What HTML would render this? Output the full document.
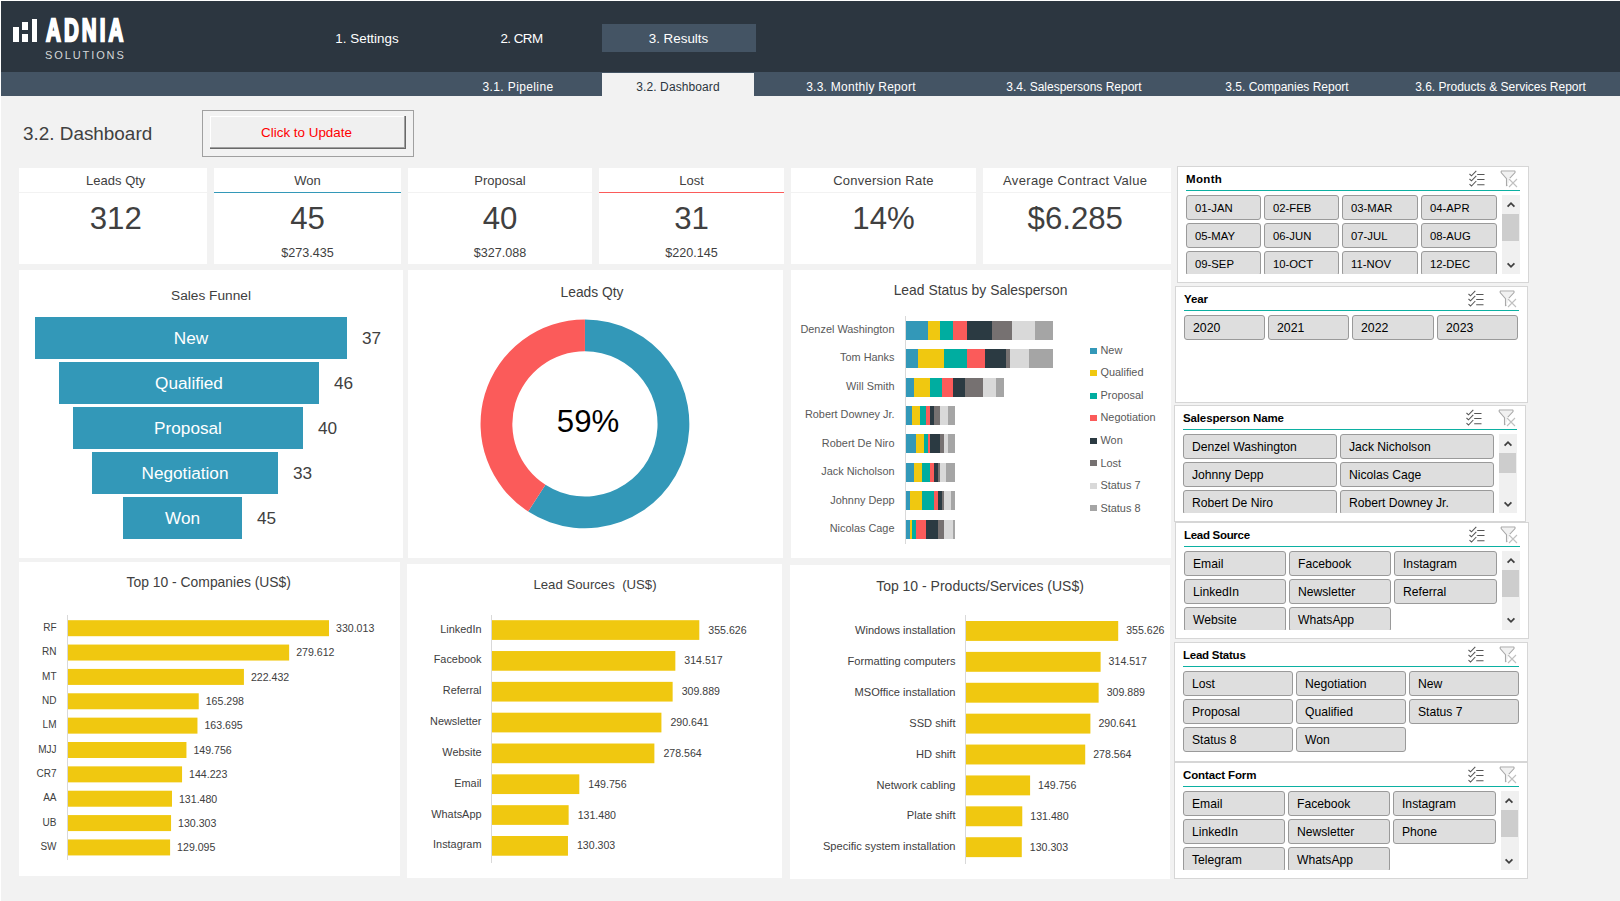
<!DOCTYPE html>
<html lang="en"><head><meta charset="utf-8"><title>3.2. Dashboard</title>
<style>
html,body{margin:0;padding:0}
body{width:1620px;height:901px;overflow:hidden;background:#fff;font-family:"Liberation Sans", sans-serif}
#p{position:relative;width:1620px;height:901px;overflow:hidden;background:#fff}
#bg{position:absolute;left:1px;top:1px;width:1619px;height:900px;background:#f2f2f2}
#p div{position:absolute}
.t{white-space:pre}
.sb{height:25px;box-sizing:border-box;border:1px solid #9a9a9a;border-radius:3px;background:#dedede;color:#000;line-height:25px;padding-left:8px;white-space:pre;overflow:hidden}
</style></head>
<body><div id="p"><div id="bg"></div>
<div style="left:1px;top:1px;width:1619px;height:71px;background:#2c3640"></div>
<div style="left:1px;top:72px;width:1619px;height:24px;background:#445464"></div>
<div style="left:13px;top:27px;width:6px;height:15px;background:#fff"></div>
<div style="left:22px;top:22px;width:6px;height:8px;background:#fff"></div>
<div style="left:22px;top:34px;width:6px;height:8px;background:#fff"></div>
<div style="left:31.5px;top:18.5px;width:5.5px;height:23.5px;background:#fff"></div>
<div class="t" style="left:45.8px;top:12.4px;height:36px;line-height:36px;font-size:32px;font-weight:700;color:#fff;transform-origin:0 50%;transform:scaleX(0.642);letter-spacing:4.8px;-webkit-text-stroke:2.3px #fff">ADNIA</div>
<div class="t" style="left:45px;top:48px;height:14px;line-height:14px;font-size:11px;color:#d4d6d8;letter-spacing:1.9px">SOLUTIONS</div>
<div style="left:602px;top:24px;width:154px;height:28px;background:#445464"></div>
<div class="t" style="left:167.00px;top:28.50px;width:400px;height:20px;line-height:20px;font-size:13.4px;color:#fff;text-align:center;font-weight:400;">1. Settings</div>
<div class="t" style="left:321.50px;top:28.50px;width:400px;height:20px;line-height:20px;font-size:13.4px;color:#fff;text-align:center;font-weight:400;letter-spacing:-0.55px;">2. CRM</div>
<div class="t" style="left:478.50px;top:28.50px;width:400px;height:20px;line-height:20px;font-size:13.4px;color:#fff;text-align:center;font-weight:400;">3. Results</div>
<div style="left:602px;top:73px;width:152px;height:23px;background:#f2f2f2"></div>
<div class="t" style="left:318.00px;top:78.00px;width:400px;height:18px;line-height:18px;font-size:12.0px;color:#fff;text-align:center;font-weight:400;letter-spacing:0.38px;">3.1. Pipeline</div>
<div class="t" style="left:478.00px;top:78.00px;width:400px;height:18px;line-height:18px;font-size:12.0px;color:#2c3640;text-align:center;font-weight:400;letter-spacing:0.1px;">3.2. Dashboard</div>
<div class="t" style="left:661.00px;top:78.00px;width:400px;height:18px;line-height:18px;font-size:12.0px;color:#fff;text-align:center;font-weight:400;letter-spacing:0.26px;">3.3. Monthly Report</div>
<div class="t" style="left:874.00px;top:78.00px;width:400px;height:18px;line-height:18px;font-size:12.0px;color:#fff;text-align:center;font-weight:400;">3.4. Salespersons Report</div>
<div class="t" style="left:1087.00px;top:78.00px;width:400px;height:18px;line-height:18px;font-size:12.0px;color:#fff;text-align:center;font-weight:400;">3.5. Companies Report</div>
<div class="t" style="left:1300.50px;top:78.00px;width:400px;height:18px;line-height:18px;font-size:12.0px;color:#fff;text-align:center;font-weight:400;">3.6. Products &amp; Services Report</div>
<div class="t" style="left:23.00px;top:120.50px;width:400px;height:26px;line-height:26px;font-size:18.9px;color:#404040;text-align:left;font-weight:400;">3.2. Dashboard</div>
<div style="left:202px;top:110px;width:212px;height:47px;border:1px solid #a0a0a0;box-sizing:border-box"></div>
<div style="left:210px;top:116px;width:196px;height:33px;background:#f0f0f0;box-shadow:inset -1px -1px 0 #696969,inset -2px -2px 0 #a0a0a0,inset 1px 1px 0 #fff"></div>
<div class="t" style="left:106.50px;top:122.50px;width:400px;height:20px;line-height:20px;font-size:13.4px;color:#ff0000;text-align:center;font-weight:400;">Click to Update</div>
<div style="left:19px;top:168px;width:188px;height:96px;background:#fff"></div>
<div style="left:19px;top:192px;width:188px;height:1px;background:#f2f2f2"></div>
<div class="t" style="left:-84.25px;top:171.50px;width:400px;height:18px;line-height:18px;font-size:13.0px;color:#404040;text-align:center;font-weight:400;">Leads Qty</div>
<div class="t" style="left:-84.25px;top:196.60px;width:400px;height:44px;line-height:44px;font-size:31.2px;color:#404040;text-align:center;font-weight:400;">312</div>
<div style="left:214px;top:168px;width:187px;height:96px;background:#fff"></div>
<div style="left:214px;top:192px;width:187px;height:1px;background:#3398b8"></div>
<div class="t" style="left:107.50px;top:171.50px;width:400px;height:18px;line-height:18px;font-size:13.0px;color:#404040;text-align:center;font-weight:400;">Won</div>
<div class="t" style="left:107.50px;top:196.60px;width:400px;height:44px;line-height:44px;font-size:31.2px;color:#404040;text-align:center;font-weight:400;">45</div>
<div class="t" style="left:107.50px;top:243.50px;width:400px;height:18px;line-height:18px;font-size:12.6px;color:#404040;text-align:center;font-weight:400;">$273.435</div>
<div style="left:408px;top:168px;width:184px;height:96px;background:#fff"></div>
<div style="left:408px;top:192px;width:184px;height:1px;background:#f2f2f2"></div>
<div class="t" style="left:300.00px;top:171.50px;width:400px;height:18px;line-height:18px;font-size:13.0px;color:#404040;text-align:center;font-weight:400;">Proposal</div>
<div class="t" style="left:300.00px;top:196.60px;width:400px;height:44px;line-height:44px;font-size:31.2px;color:#404040;text-align:center;font-weight:400;">40</div>
<div class="t" style="left:300.00px;top:243.50px;width:400px;height:18px;line-height:18px;font-size:12.6px;color:#404040;text-align:center;font-weight:400;">$327.088</div>
<div style="left:599px;top:168px;width:185px;height:96px;background:#fff"></div>
<div style="left:599px;top:192px;width:185px;height:1px;background:#fb5b5a"></div>
<div class="t" style="left:491.50px;top:171.50px;width:400px;height:18px;line-height:18px;font-size:13.0px;color:#404040;text-align:center;font-weight:400;">Lost</div>
<div class="t" style="left:491.50px;top:196.60px;width:400px;height:44px;line-height:44px;font-size:31.2px;color:#404040;text-align:center;font-weight:400;">31</div>
<div class="t" style="left:491.50px;top:243.50px;width:400px;height:18px;line-height:18px;font-size:12.6px;color:#404040;text-align:center;font-weight:400;">$220.145</div>
<div style="left:791px;top:168px;width:185px;height:96px;background:#fff"></div>
<div style="left:791px;top:192px;width:185px;height:1px;background:#f2f2f2"></div>
<div class="t" style="left:683.50px;top:171.50px;width:400px;height:18px;line-height:18px;font-size:13.0px;color:#404040;text-align:center;font-weight:400;letter-spacing:0.25px;">Conversion Rate</div>
<div class="t" style="left:683.50px;top:196.60px;width:400px;height:44px;line-height:44px;font-size:31.2px;color:#404040;text-align:center;font-weight:400;">14%</div>
<div style="left:983px;top:168px;width:187.5px;height:96px;background:#fff"></div>
<div style="left:983px;top:192px;width:187.5px;height:1px;background:#f2f2f2"></div>
<div class="t" style="left:875.25px;top:171.50px;width:400px;height:18px;line-height:18px;font-size:13.0px;color:#404040;text-align:center;font-weight:400;letter-spacing:0.34px;">Average Contract Value</div>
<div class="t" style="left:875.25px;top:196.60px;width:400px;height:44px;line-height:44px;font-size:31.2px;color:#404040;text-align:center;font-weight:400;">$6.285</div>
<div style="left:19px;top:270px;width:384px;height:288px;background:#fff"></div>
<div class="t" style="left:11.00px;top:285.50px;width:400px;height:20px;line-height:20px;font-size:13.7px;color:#404040;text-align:center;font-weight:400;">Sales Funnel</div>
<div style="left:35px;top:317px;width:312px;height:42px;background:#3398b8"></div>
<div class="t" style="left:-9.00px;top:326.00px;width:400px;height:24px;line-height:24px;font-size:17.2px;color:#fff;text-align:center;font-weight:400;">New</div>
<div class="t" style="left:362.00px;top:326.00px;width:400px;height:24px;line-height:24px;font-size:17.2px;color:#404040;text-align:left;font-weight:400;">37</div>
<div style="left:59px;top:362px;width:260px;height:42px;background:#3398b8"></div>
<div class="t" style="left:-11.00px;top:371.00px;width:400px;height:24px;line-height:24px;font-size:17.2px;color:#fff;text-align:center;font-weight:400;">Qualified</div>
<div class="t" style="left:334.00px;top:371.00px;width:400px;height:24px;line-height:24px;font-size:17.2px;color:#404040;text-align:left;font-weight:400;">46</div>
<div style="left:73px;top:407px;width:230px;height:42px;background:#3398b8"></div>
<div class="t" style="left:-12.00px;top:416.00px;width:400px;height:24px;line-height:24px;font-size:17.2px;color:#fff;text-align:center;font-weight:400;">Proposal</div>
<div class="t" style="left:318.00px;top:416.00px;width:400px;height:24px;line-height:24px;font-size:17.2px;color:#404040;text-align:left;font-weight:400;">40</div>
<div style="left:92px;top:452px;width:186px;height:42px;background:#3398b8"></div>
<div class="t" style="left:-15.00px;top:461.00px;width:400px;height:24px;line-height:24px;font-size:17.2px;color:#fff;text-align:center;font-weight:400;">Negotiation</div>
<div class="t" style="left:293.00px;top:461.00px;width:400px;height:24px;line-height:24px;font-size:17.2px;color:#404040;text-align:left;font-weight:400;">33</div>
<div style="left:123px;top:497px;width:119px;height:42px;background:#3398b8"></div>
<div class="t" style="left:-17.50px;top:506.00px;width:400px;height:24px;line-height:24px;font-size:17.2px;color:#fff;text-align:center;font-weight:400;">Won</div>
<div class="t" style="left:257.00px;top:506.00px;width:400px;height:24px;line-height:24px;font-size:17.2px;color:#404040;text-align:left;font-weight:400;">45</div>
<div style="left:408px;top:270px;width:375px;height:288px;background:#fff"></div>
<div class="t" style="left:392.00px;top:282.75px;width:400px;height:20px;line-height:20px;font-size:13.8px;color:#404040;text-align:center;font-weight:400;">Leads Qty</div>
<svg style="position:absolute;left:0;top:0" width="1620" height="901"><path d="M584.95,319.50 A104.4,104.4 0 1 1 528.18,511.52 L545.47,484.83 A72.6,72.6 0 1 0 584.95,351.30 Z" fill="#3398b8"/><path d="M528.18,511.52 A104.4,104.4 0 0 1 584.95,319.50 L584.95,351.30 A72.6,72.6 0 0 0 545.47,484.83 Z" fill="#fb5b5a"/></svg>
<div class="t" style="left:388.00px;top:400.25px;width:400px;height:44px;line-height:44px;font-size:31.2px;color:#000;text-align:center;font-weight:400;">59%</div>
<div style="left:791px;top:270px;width:380px;height:288px;background:#fff"></div>
<div class="t" style="left:780.50px;top:279.75px;width:400px;height:20px;line-height:20px;font-size:13.9px;color:#404040;text-align:center;font-weight:400;">Lead Status by Salesperson</div>
<div style="left:905px;top:316px;width:1px;height:228px;background:#d9d9d9"></div>
<div style="left:906px;top:321px;width:22px;height:19px;background:#3398b8"></div>
<div style="left:928px;top:321px;width:12px;height:19px;background:#f0c810"></div>
<div style="left:940px;top:321px;width:13px;height:19px;background:#00ada0"></div>
<div style="left:953px;top:321px;width:14px;height:19px;background:#fb5b5a"></div>
<div style="left:967px;top:321px;width:25px;height:19px;background:#2b3a42"></div>
<div style="left:992px;top:321px;width:20px;height:19px;background:#767171"></div>
<div style="left:1012px;top:321px;width:23px;height:19px;background:#d9d9d9"></div>
<div style="left:1035px;top:321px;width:18px;height:19px;background:#a5a5a5"></div>
<div class="t" style="left:494.50px;top:321.00px;width:400px;height:16px;line-height:16px;font-size:10.9px;color:#595959;text-align:right;font-weight:400;">Denzel Washington</div>
<div style="left:906px;top:349px;width:12px;height:19px;background:#3398b8"></div>
<div style="left:918px;top:349px;width:26px;height:19px;background:#f0c810"></div>
<div style="left:944px;top:349px;width:23px;height:19px;background:#00ada0"></div>
<div style="left:967px;top:349px;width:18px;height:19px;background:#fb5b5a"></div>
<div style="left:985px;top:349px;width:21px;height:19px;background:#2b3a42"></div>
<div style="left:1006px;top:349px;width:4px;height:19px;background:#767171"></div>
<div style="left:1010px;top:349px;width:19px;height:19px;background:#d9d9d9"></div>
<div style="left:1029px;top:349px;width:24px;height:19px;background:#a5a5a5"></div>
<div class="t" style="left:494.50px;top:349.43px;width:400px;height:16px;line-height:16px;font-size:10.9px;color:#595959;text-align:right;font-weight:400;">Tom Hanks</div>
<div style="left:906px;top:378px;width:8px;height:19px;background:#3398b8"></div>
<div style="left:914px;top:378px;width:16px;height:19px;background:#f0c810"></div>
<div style="left:930px;top:378px;width:12px;height:19px;background:#00ada0"></div>
<div style="left:942px;top:378px;width:11px;height:19px;background:#fb5b5a"></div>
<div style="left:953px;top:378px;width:12px;height:19px;background:#2b3a42"></div>
<div style="left:965px;top:378px;width:18px;height:19px;background:#767171"></div>
<div style="left:983px;top:378px;width:13px;height:19px;background:#d9d9d9"></div>
<div style="left:996px;top:378px;width:8px;height:19px;background:#a5a5a5"></div>
<div class="t" style="left:494.50px;top:377.86px;width:400px;height:16px;line-height:16px;font-size:10.9px;color:#595959;text-align:right;font-weight:400;">Will Smith</div>
<div style="left:906px;top:406px;width:6px;height:19px;background:#3398b8"></div>
<div style="left:912px;top:406px;width:8px;height:19px;background:#f0c810"></div>
<div style="left:920px;top:406px;width:6px;height:19px;background:#00ada0"></div>
<div style="left:926px;top:406px;width:4px;height:19px;background:#fb5b5a"></div>
<div style="left:930px;top:406px;width:4px;height:19px;background:#2b3a42"></div>
<div style="left:934px;top:406px;width:6px;height:19px;background:#767171"></div>
<div style="left:940px;top:406px;width:8px;height:19px;background:#d9d9d9"></div>
<div style="left:948px;top:406px;width:7px;height:19px;background:#a5a5a5"></div>
<div class="t" style="left:494.50px;top:406.29px;width:400px;height:16px;line-height:16px;font-size:10.9px;color:#595959;text-align:right;font-weight:400;">Robert Downey Jr.</div>
<div style="left:906px;top:434px;width:10px;height:19px;background:#3398b8"></div>
<div style="left:916px;top:434px;width:8px;height:19px;background:#f0c810"></div>
<div style="left:924px;top:434px;width:4px;height:19px;background:#00ada0"></div>
<div style="left:928px;top:434px;width:2px;height:19px;background:#fb5b5a"></div>
<div style="left:930px;top:434px;width:10px;height:19px;background:#2b3a42"></div>
<div style="left:940px;top:434px;width:4px;height:19px;background:#767171"></div>
<div style="left:944px;top:434px;width:4px;height:19px;background:#d9d9d9"></div>
<div style="left:948px;top:434px;width:7px;height:19px;background:#a5a5a5"></div>
<div class="t" style="left:494.50px;top:434.72px;width:400px;height:16px;line-height:16px;font-size:10.9px;color:#595959;text-align:right;font-weight:400;">Robert De Niro</div>
<div style="left:906px;top:463px;width:8px;height:19px;background:#3398b8"></div>
<div style="left:914px;top:463px;width:8px;height:19px;background:#f0c810"></div>
<div style="left:922px;top:463px;width:8px;height:19px;background:#00ada0"></div>
<div style="left:930px;top:463px;width:4px;height:19px;background:#fb5b5a"></div>
<div style="left:934px;top:463px;width:4px;height:19px;background:#2b3a42"></div>
<div style="left:938px;top:463px;width:2px;height:19px;background:#767171"></div>
<div style="left:940px;top:463px;width:6px;height:19px;background:#d9d9d9"></div>
<div style="left:946px;top:463px;width:9px;height:19px;background:#a5a5a5"></div>
<div class="t" style="left:494.50px;top:463.15px;width:400px;height:16px;line-height:16px;font-size:10.9px;color:#595959;text-align:right;font-weight:400;">Jack Nicholson</div>
<div style="left:906px;top:491px;width:4px;height:19px;background:#3398b8"></div>
<div style="left:910px;top:491px;width:12px;height:19px;background:#f0c810"></div>
<div style="left:922px;top:491px;width:12px;height:19px;background:#00ada0"></div>
<div style="left:934px;top:491px;width:4px;height:19px;background:#fb5b5a"></div>
<div style="left:938px;top:491px;width:4px;height:19px;background:#2b3a42"></div>
<div style="left:942px;top:491px;width:2px;height:19px;background:#767171"></div>
<div style="left:944px;top:491px;width:7px;height:19px;background:#d9d9d9"></div>
<div style="left:951px;top:491px;width:4px;height:19px;background:#a5a5a5"></div>
<div class="t" style="left:494.50px;top:491.58px;width:400px;height:16px;line-height:16px;font-size:10.9px;color:#595959;text-align:right;font-weight:400;">Johnny Depp</div>
<div style="left:906px;top:520px;width:4px;height:19px;background:#3398b8"></div>
<div style="left:910px;top:520px;width:2px;height:19px;background:#f0c810"></div>
<div style="left:912px;top:520px;width:4px;height:19px;background:#00ada0"></div>
<div style="left:916px;top:520px;width:10px;height:19px;background:#fb5b5a"></div>
<div style="left:926px;top:520px;width:12px;height:19px;background:#2b3a42"></div>
<div style="left:938px;top:520px;width:6px;height:19px;background:#767171"></div>
<div style="left:944px;top:520px;width:9px;height:19px;background:#d9d9d9"></div>
<div style="left:953px;top:520px;width:2px;height:19px;background:#a5a5a5"></div>
<div class="t" style="left:494.50px;top:520.01px;width:400px;height:16px;line-height:16px;font-size:10.9px;color:#595959;text-align:right;font-weight:400;">Nicolas Cage</div>
<div style="left:1090px;top:348px;width:7px;height:6px;background:#3398b8"></div>
<div class="t" style="left:1100.50px;top:341.70px;width:400px;height:16px;line-height:16px;font-size:10.9px;color:#595959;text-align:left;font-weight:400;">New</div>
<div style="left:1090px;top:370px;width:7px;height:6px;background:#f0c810"></div>
<div class="t" style="left:1100.50px;top:364.27px;width:400px;height:16px;line-height:16px;font-size:10.9px;color:#595959;text-align:left;font-weight:400;">Qualified</div>
<div style="left:1090px;top:393px;width:7px;height:6px;background:#00ada0"></div>
<div class="t" style="left:1100.50px;top:386.84px;width:400px;height:16px;line-height:16px;font-size:10.9px;color:#595959;text-align:left;font-weight:400;">Proposal</div>
<div style="left:1090px;top:415px;width:7px;height:6px;background:#fb5b5a"></div>
<div class="t" style="left:1100.50px;top:409.41px;width:400px;height:16px;line-height:16px;font-size:10.9px;color:#595959;text-align:left;font-weight:400;">Negotiation</div>
<div style="left:1090px;top:438px;width:7px;height:6px;background:#2b3a42"></div>
<div class="t" style="left:1100.50px;top:431.98px;width:400px;height:16px;line-height:16px;font-size:10.9px;color:#595959;text-align:left;font-weight:400;">Won</div>
<div style="left:1090px;top:460px;width:7px;height:6px;background:#767171"></div>
<div class="t" style="left:1100.50px;top:454.55px;width:400px;height:16px;line-height:16px;font-size:10.9px;color:#595959;text-align:left;font-weight:400;">Lost</div>
<div style="left:1090px;top:483px;width:7px;height:6px;background:#d9d9d9"></div>
<div class="t" style="left:1100.50px;top:477.12px;width:400px;height:16px;line-height:16px;font-size:10.9px;color:#595959;text-align:left;font-weight:400;">Status 7</div>
<div style="left:1090px;top:505px;width:7px;height:6px;background:#a5a5a5"></div>
<div class="t" style="left:1100.50px;top:499.69px;width:400px;height:16px;line-height:16px;font-size:10.9px;color:#595959;text-align:left;font-weight:400;">Status 8</div>
<div style="left:19px;top:562px;width:381px;height:314px;background:#fff"></div>
<div class="t" style="left:8.75px;top:571.90px;width:400px;height:20px;line-height:20px;font-size:13.9px;color:#404040;text-align:center;font-weight:400;">Top 10 - Companies (US$)</div>
<div style="left:67px;top:615px;width:1px;height:245px;background:#d9d9d9"></div>
<svg style="position:absolute;left:0;top:0" width="1620" height="901" fill="#f0c810"><rect x="68" y="620.20" width="261.00" height="16.0"/><rect x="68" y="644.56" width="221.14" height="16.0"/><rect x="68" y="668.92" width="175.92" height="16.0"/><rect x="68" y="693.28" width="130.73" height="16.0"/><rect x="68" y="717.64" width="129.46" height="16.0"/><rect x="68" y="742.00" width="118.44" height="16.0"/><rect x="68" y="766.36" width="114.06" height="16.0"/><rect x="68" y="790.72" width="103.98" height="16.0"/><rect x="68" y="815.08" width="103.05" height="16.0"/><rect x="68" y="839.44" width="102.10" height="16.0"/></svg>
<div class="t" style="left:-343.50px;top:620.80px;width:400px;height:14px;line-height:14px;font-size:10.0px;color:#404040;text-align:right;font-weight:400;">RF</div>
<div class="t" style="left:336.00px;top:620.00px;width:400px;height:16px;line-height:16px;font-size:10.6px;color:#404040;text-align:left;font-weight:400;">330.013</div>
<div class="t" style="left:-343.50px;top:645.16px;width:400px;height:14px;line-height:14px;font-size:10.0px;color:#404040;text-align:right;font-weight:400;">RN</div>
<div class="t" style="left:296.14px;top:644.36px;width:400px;height:16px;line-height:16px;font-size:10.6px;color:#404040;text-align:left;font-weight:400;">279.612</div>
<div class="t" style="left:-343.50px;top:669.52px;width:400px;height:14px;line-height:14px;font-size:10.0px;color:#404040;text-align:right;font-weight:400;">MT</div>
<div class="t" style="left:250.92px;top:668.72px;width:400px;height:16px;line-height:16px;font-size:10.6px;color:#404040;text-align:left;font-weight:400;">222.432</div>
<div class="t" style="left:-343.50px;top:693.88px;width:400px;height:14px;line-height:14px;font-size:10.0px;color:#404040;text-align:right;font-weight:400;">ND</div>
<div class="t" style="left:205.73px;top:693.08px;width:400px;height:16px;line-height:16px;font-size:10.6px;color:#404040;text-align:left;font-weight:400;">165.298</div>
<div class="t" style="left:-343.50px;top:718.24px;width:400px;height:14px;line-height:14px;font-size:10.0px;color:#404040;text-align:right;font-weight:400;">LM</div>
<div class="t" style="left:204.46px;top:717.44px;width:400px;height:16px;line-height:16px;font-size:10.6px;color:#404040;text-align:left;font-weight:400;">163.695</div>
<div class="t" style="left:-343.50px;top:742.60px;width:400px;height:14px;line-height:14px;font-size:10.0px;color:#404040;text-align:right;font-weight:400;">MJJ</div>
<div class="t" style="left:193.44px;top:741.80px;width:400px;height:16px;line-height:16px;font-size:10.6px;color:#404040;text-align:left;font-weight:400;">149.756</div>
<div class="t" style="left:-343.50px;top:766.96px;width:400px;height:14px;line-height:14px;font-size:10.0px;color:#404040;text-align:right;font-weight:400;">CR7</div>
<div class="t" style="left:189.06px;top:766.16px;width:400px;height:16px;line-height:16px;font-size:10.6px;color:#404040;text-align:left;font-weight:400;">144.223</div>
<div class="t" style="left:-343.50px;top:791.32px;width:400px;height:14px;line-height:14px;font-size:10.0px;color:#404040;text-align:right;font-weight:400;">AA</div>
<div class="t" style="left:178.98px;top:790.52px;width:400px;height:16px;line-height:16px;font-size:10.6px;color:#404040;text-align:left;font-weight:400;">131.480</div>
<div class="t" style="left:-343.50px;top:815.68px;width:400px;height:14px;line-height:14px;font-size:10.0px;color:#404040;text-align:right;font-weight:400;">UB</div>
<div class="t" style="left:178.05px;top:814.88px;width:400px;height:16px;line-height:16px;font-size:10.6px;color:#404040;text-align:left;font-weight:400;">130.303</div>
<div class="t" style="left:-343.50px;top:840.04px;width:400px;height:14px;line-height:14px;font-size:10.0px;color:#404040;text-align:right;font-weight:400;">SW</div>
<div class="t" style="left:177.10px;top:839.24px;width:400px;height:16px;line-height:16px;font-size:10.6px;color:#404040;text-align:left;font-weight:400;">129.095</div>
<div style="left:407px;top:564px;width:375px;height:314px;background:#fff"></div>
<div class="t" style="left:395.00px;top:575.50px;width:400px;height:18px;line-height:18px;font-size:13.2px;color:#404040;text-align:center;font-weight:400;">Lead Sources&nbsp; (US$)</div>
<div style="left:491px;top:614.5px;width:1px;height:248.5px;background:#d9d9d9"></div>
<svg style="position:absolute;left:0;top:0" width="1620" height="901" fill="#f0c810"><rect x="492" y="620.20" width="207.30" height="19.7"/><rect x="492" y="651.03" width="183.34" height="19.7"/><rect x="492" y="681.86" width="180.64" height="19.7"/><rect x="492" y="712.69" width="169.42" height="19.7"/><rect x="492" y="743.52" width="162.38" height="19.7"/><rect x="492" y="774.35" width="87.30" height="19.7"/><rect x="492" y="805.18" width="76.64" height="19.7"/><rect x="492" y="836.01" width="75.96" height="19.7"/></svg>
<div class="t" style="left:81.50px;top:620.55px;width:400px;height:16px;line-height:16px;font-size:10.9px;color:#404040;text-align:right;font-weight:400;">LinkedIn</div>
<div class="t" style="left:708.30px;top:621.55px;width:400px;height:16px;line-height:16px;font-size:10.6px;color:#404040;text-align:left;font-weight:400;">355.626</div>
<div class="t" style="left:81.50px;top:651.38px;width:400px;height:16px;line-height:16px;font-size:10.9px;color:#404040;text-align:right;font-weight:400;">Facebook</div>
<div class="t" style="left:684.34px;top:652.38px;width:400px;height:16px;line-height:16px;font-size:10.6px;color:#404040;text-align:left;font-weight:400;">314.517</div>
<div class="t" style="left:81.50px;top:682.21px;width:400px;height:16px;line-height:16px;font-size:10.9px;color:#404040;text-align:right;font-weight:400;">Referral</div>
<div class="t" style="left:681.64px;top:683.21px;width:400px;height:16px;line-height:16px;font-size:10.6px;color:#404040;text-align:left;font-weight:400;">309.889</div>
<div class="t" style="left:81.50px;top:713.04px;width:400px;height:16px;line-height:16px;font-size:10.9px;color:#404040;text-align:right;font-weight:400;">Newsletter</div>
<div class="t" style="left:670.42px;top:714.04px;width:400px;height:16px;line-height:16px;font-size:10.6px;color:#404040;text-align:left;font-weight:400;">290.641</div>
<div class="t" style="left:81.50px;top:743.87px;width:400px;height:16px;line-height:16px;font-size:10.9px;color:#404040;text-align:right;font-weight:400;">Website</div>
<div class="t" style="left:663.38px;top:744.87px;width:400px;height:16px;line-height:16px;font-size:10.6px;color:#404040;text-align:left;font-weight:400;">278.564</div>
<div class="t" style="left:81.50px;top:774.70px;width:400px;height:16px;line-height:16px;font-size:10.9px;color:#404040;text-align:right;font-weight:400;">Email</div>
<div class="t" style="left:588.30px;top:775.70px;width:400px;height:16px;line-height:16px;font-size:10.6px;color:#404040;text-align:left;font-weight:400;">149.756</div>
<div class="t" style="left:81.50px;top:805.53px;width:400px;height:16px;line-height:16px;font-size:10.9px;color:#404040;text-align:right;font-weight:400;">WhatsApp</div>
<div class="t" style="left:577.64px;top:806.53px;width:400px;height:16px;line-height:16px;font-size:10.6px;color:#404040;text-align:left;font-weight:400;">131.480</div>
<div class="t" style="left:81.50px;top:836.36px;width:400px;height:16px;line-height:16px;font-size:10.9px;color:#404040;text-align:right;font-weight:400;">Instagram</div>
<div class="t" style="left:576.96px;top:837.36px;width:400px;height:16px;line-height:16px;font-size:10.6px;color:#404040;text-align:left;font-weight:400;">130.303</div>
<div style="left:790px;top:565px;width:380px;height:314px;background:#fff"></div>
<div class="t" style="left:780.00px;top:575.50px;width:400px;height:20px;line-height:20px;font-size:14.0px;color:#404040;text-align:center;font-weight:400;">Top 10 - Products/Services (US$)</div>
<div style="left:965px;top:615px;width:1px;height:249px;background:#d9d9d9"></div>
<svg style="position:absolute;left:0;top:0" width="1620" height="901" fill="#f0c810"><rect x="966" y="621.00" width="152.20" height="19.9"/><rect x="966" y="651.89" width="134.61" height="19.9"/><rect x="966" y="682.78" width="132.63" height="19.9"/><rect x="966" y="713.67" width="124.39" height="19.9"/><rect x="966" y="744.56" width="119.22" height="19.9"/><rect x="966" y="775.45" width="64.09" height="19.9"/><rect x="966" y="806.34" width="56.27" height="19.9"/><rect x="966" y="837.23" width="55.77" height="19.9"/></svg>
<div class="t" style="left:555.50px;top:622.15px;width:400px;height:16px;line-height:16px;font-size:11.1px;color:#404040;text-align:right;font-weight:400;">Windows installation</div>
<div class="t" style="left:1126.20px;top:622.45px;width:400px;height:16px;line-height:16px;font-size:10.6px;color:#404040;text-align:left;font-weight:400;">355.626</div>
<div class="t" style="left:555.50px;top:653.04px;width:400px;height:16px;line-height:16px;font-size:11.1px;color:#404040;text-align:right;font-weight:400;">Formatting computers</div>
<div class="t" style="left:1108.61px;top:653.34px;width:400px;height:16px;line-height:16px;font-size:10.6px;color:#404040;text-align:left;font-weight:400;">314.517</div>
<div class="t" style="left:555.50px;top:683.93px;width:400px;height:16px;line-height:16px;font-size:11.1px;color:#404040;text-align:right;font-weight:400;">MSOffice installation</div>
<div class="t" style="left:1106.63px;top:684.23px;width:400px;height:16px;line-height:16px;font-size:10.6px;color:#404040;text-align:left;font-weight:400;">309.889</div>
<div class="t" style="left:555.50px;top:714.82px;width:400px;height:16px;line-height:16px;font-size:11.1px;color:#404040;text-align:right;font-weight:400;">SSD shift</div>
<div class="t" style="left:1098.39px;top:715.12px;width:400px;height:16px;line-height:16px;font-size:10.6px;color:#404040;text-align:left;font-weight:400;">290.641</div>
<div class="t" style="left:555.50px;top:745.71px;width:400px;height:16px;line-height:16px;font-size:11.1px;color:#404040;text-align:right;font-weight:400;">HD shift</div>
<div class="t" style="left:1093.22px;top:746.01px;width:400px;height:16px;line-height:16px;font-size:10.6px;color:#404040;text-align:left;font-weight:400;">278.564</div>
<div class="t" style="left:555.50px;top:776.60px;width:400px;height:16px;line-height:16px;font-size:11.1px;color:#404040;text-align:right;font-weight:400;">Network cabling</div>
<div class="t" style="left:1038.09px;top:776.90px;width:400px;height:16px;line-height:16px;font-size:10.6px;color:#404040;text-align:left;font-weight:400;">149.756</div>
<div class="t" style="left:555.50px;top:807.49px;width:400px;height:16px;line-height:16px;font-size:11.1px;color:#404040;text-align:right;font-weight:400;">Plate shift</div>
<div class="t" style="left:1030.27px;top:807.79px;width:400px;height:16px;line-height:16px;font-size:10.6px;color:#404040;text-align:left;font-weight:400;">131.480</div>
<div class="t" style="left:555.50px;top:838.38px;width:400px;height:16px;line-height:16px;font-size:11.1px;color:#404040;text-align:right;font-weight:400;">Specific system installation</div>
<div class="t" style="left:1029.77px;top:838.68px;width:400px;height:16px;line-height:16px;font-size:10.6px;color:#404040;text-align:left;font-weight:400;">130.303</div>
<div style="left:1177px;top:166px;width:352px;height:117px;background:#fff;border:1px solid #d6d6d6;box-sizing:border-box"></div>
<div class="t" style="left:1186.00px;top:171.00px;width:400px;height:16px;line-height:16px;font-size:11.5px;color:#000;text-align:left;font-weight:700;letter-spacing:0.35px;">Month</div>
<div style="left:1186px;top:190px;width:334px;height:1px;background:#0cb0a2"></div>
<svg width="18" height="17" viewBox="0 0 18 17" style="position:absolute;left:1469.2px;top:169.5px" fill="none" stroke="#555" stroke-width="1.05"><path d="M0.5,4 L2.5,5.8 L7.3,0.8 M0.5,9 L2.5,10.8 L7.3,5.8 M0.5,14.2 L2.5,16 L7.3,11"/><path d="M8.2,4.5 H15.5 M8.2,9.5 H15.5 M8.2,14.7 H15.5" stroke-width="1.15"/></svg>
<svg width="19" height="18" viewBox="0 0 19 18" style="position:absolute;left:1500px;top:169.75px" fill="none" stroke="#a9a9a9" stroke-width="1.1"><path d="M1.6,1.4 H14.6 L8.9,8.6 V13 L6.9,14.2 V8.6 Z" fill="#f1f1f1" stroke="none"/><path d="M1,1 H15.2 M15,1 V2.6 L9.8,8.2 M1.2,1 V2.6 L6.5,8.6 V15.6 L7.6,14.9"/><path d="M9,9 L17,17 M17,9 L9,17" stroke="#c0c0c0"/></svg>
<div style="left:1178px;top:195px;width:350px;height:79px;overflow:hidden">
<div class="sb" style="left:8px;top:0px;width:75px;font-size:11.3px">01-JAN</div>
<div class="sb" style="left:86px;top:0px;width:75px;font-size:11.3px">02-FEB</div>
<div class="sb" style="left:164px;top:0px;width:76px;font-size:11.3px">03-MAR</div>
<div class="sb" style="left:243px;top:0px;width:76px;font-size:11.3px">04-APR</div>
<div class="sb" style="left:8px;top:28px;width:75px;font-size:11.3px">05-MAY</div>
<div class="sb" style="left:86px;top:28px;width:75px;font-size:11.3px">06-JUN</div>
<div class="sb" style="left:164px;top:28px;width:76px;font-size:11.3px">07-JUL</div>
<div class="sb" style="left:243px;top:28px;width:76px;font-size:11.3px">08-AUG</div>
<div class="sb" style="left:8px;top:56px;width:75px;font-size:11.3px">09-SEP</div>
<div class="sb" style="left:86px;top:56px;width:75px;font-size:11.3px">10-OCT</div>
<div class="sb" style="left:164px;top:56px;width:76px;font-size:11.3px">11-NOV</div>
<div class="sb" style="left:243px;top:56px;width:76px;font-size:11.3px">12-DEC</div>
</div>
<div style="left:1502px;top:195px;width:18px;height:79px;background:#f0f0f0"></div>
<div style="left:1502px;top:214px;width:17px;height:27px;background:#cdcdcd"></div>
<svg width="10" height="7" viewBox="0 0 10 7" style="position:absolute;left:1505.9px;top:200.7px" fill="none" stroke="#404040" stroke-width="1.8"><path d="M1.6,5.6 L5,2.2 L8.4,5.6"/></svg>
<svg width="10" height="7" viewBox="0 0 10 7" style="position:absolute;left:1505.9px;top:261.5px" fill="none" stroke="#404040" stroke-width="1.8"><path d="M1.6,1.4 L5,4.8 L8.4,1.4"/></svg>
<div style="left:1175px;top:286px;width:353px;height:117px;background:#fff;border:1px solid #d6d6d6;box-sizing:border-box"></div>
<div class="t" style="left:1184.00px;top:291.00px;width:400px;height:16px;line-height:16px;font-size:11.5px;color:#000;text-align:left;font-weight:700;letter-spacing:-0.07px;">Year</div>
<div style="left:1184px;top:310px;width:335px;height:1px;background:#0cb0a2"></div>
<svg width="18" height="17" viewBox="0 0 18 17" style="position:absolute;left:1467.7px;top:289.5px" fill="none" stroke="#555" stroke-width="1.05"><path d="M0.5,4 L2.5,5.8 L7.3,0.8 M0.5,9 L2.5,10.8 L7.3,5.8 M0.5,14.2 L2.5,16 L7.3,11"/><path d="M8.2,4.5 H15.5 M8.2,9.5 H15.5 M8.2,14.7 H15.5" stroke-width="1.15"/></svg>
<svg width="19" height="18" viewBox="0 0 19 18" style="position:absolute;left:1499px;top:289.75px" fill="none" stroke="#a9a9a9" stroke-width="1.1"><path d="M1.6,1.4 H14.6 L8.9,8.6 V13 L6.9,14.2 V8.6 Z" fill="#f1f1f1" stroke="none"/><path d="M1,1 H15.2 M15,1 V2.6 L9.8,8.2 M1.2,1 V2.6 L6.5,8.6 V15.6 L7.6,14.9"/><path d="M9,9 L17,17 M17,9 L9,17" stroke="#c0c0c0"/></svg>
<div style="left:1176px;top:315px;width:351px;height:25px;overflow:hidden">
<div class="sb" style="left:8px;top:0px;width:81px;font-size:12.3px">2020</div>
<div class="sb" style="left:92px;top:0px;width:81px;font-size:12.3px">2021</div>
<div class="sb" style="left:176px;top:0px;width:82px;font-size:12.3px">2022</div>
<div class="sb" style="left:261px;top:0px;width:81px;font-size:12.3px">2023</div>
</div>
<div style="left:1174px;top:405px;width:352px;height:117px;background:#fff;border:1px solid #d6d6d6;box-sizing:border-box"></div>
<div class="t" style="left:1183.00px;top:410.00px;width:400px;height:16px;line-height:16px;font-size:11.5px;color:#000;text-align:left;font-weight:700;letter-spacing:-0.13px;">Salesperson Name</div>
<div style="left:1183px;top:429px;width:334px;height:1px;background:#0cb0a2"></div>
<svg width="18" height="17" viewBox="0 0 18 17" style="position:absolute;left:1466.2px;top:408.5px" fill="none" stroke="#555" stroke-width="1.05"><path d="M0.5,4 L2.5,5.8 L7.3,0.8 M0.5,9 L2.5,10.8 L7.3,5.8 M0.5,14.2 L2.5,16 L7.3,11"/><path d="M8.2,4.5 H15.5 M8.2,9.5 H15.5 M8.2,14.7 H15.5" stroke-width="1.15"/></svg>
<svg width="19" height="18" viewBox="0 0 19 18" style="position:absolute;left:1497.5px;top:408.75px" fill="none" stroke="#a9a9a9" stroke-width="1.1"><path d="M1.6,1.4 H14.6 L8.9,8.6 V13 L6.9,14.2 V8.6 Z" fill="#f1f1f1" stroke="none"/><path d="M1,1 H15.2 M15,1 V2.6 L9.8,8.2 M1.2,1 V2.6 L6.5,8.6 V15.6 L7.6,14.9"/><path d="M9,9 L17,17 M17,9 L9,17" stroke="#c0c0c0"/></svg>
<div style="left:1175px;top:434px;width:350px;height:79px;overflow:hidden">
<div class="sb" style="left:8px;top:0px;width:154px;font-size:12.15px">Denzel Washington</div>
<div class="sb" style="left:165px;top:0px;width:154px;font-size:12.15px">Jack Nicholson</div>
<div class="sb" style="left:8px;top:28px;width:154px;font-size:12.15px">Johnny Depp</div>
<div class="sb" style="left:165px;top:28px;width:154px;font-size:12.15px">Nicolas Cage</div>
<div class="sb" style="left:8px;top:56px;width:154px;font-size:12.15px">Robert De Niro</div>
<div class="sb" style="left:165px;top:56px;width:154px;font-size:12.15px">Robert Downey Jr.</div>
</div>
<div style="left:1499px;top:434px;width:18px;height:79px;background:#f0f0f0"></div>
<div style="left:1499px;top:453px;width:17px;height:20px;background:#cdcdcd"></div>
<svg width="10" height="7" viewBox="0 0 10 7" style="position:absolute;left:1502.9px;top:439.7px" fill="none" stroke="#404040" stroke-width="1.8"><path d="M1.6,5.6 L5,2.2 L8.4,5.6"/></svg>
<svg width="10" height="7" viewBox="0 0 10 7" style="position:absolute;left:1502.9px;top:500.5px" fill="none" stroke="#404040" stroke-width="1.8"><path d="M1.6,1.4 L5,4.8 L8.4,1.4"/></svg>
<div style="left:1175px;top:522px;width:354px;height:117px;background:#fff;border:1px solid #d6d6d6;box-sizing:border-box"></div>
<div class="t" style="left:1184.00px;top:527.00px;width:400px;height:16px;line-height:16px;font-size:11.5px;color:#000;text-align:left;font-weight:700;letter-spacing:-0.3px;">Lead Source</div>
<div style="left:1184px;top:546px;width:336px;height:1px;background:#0cb0a2"></div>
<svg width="18" height="17" viewBox="0 0 18 17" style="position:absolute;left:1469.2px;top:525.5px" fill="none" stroke="#555" stroke-width="1.05"><path d="M0.5,4 L2.5,5.8 L7.3,0.8 M0.5,9 L2.5,10.8 L7.3,5.8 M0.5,14.2 L2.5,16 L7.3,11"/><path d="M8.2,4.5 H15.5 M8.2,9.5 H15.5 M8.2,14.7 H15.5" stroke-width="1.15"/></svg>
<svg width="19" height="18" viewBox="0 0 19 18" style="position:absolute;left:1500px;top:525.75px" fill="none" stroke="#a9a9a9" stroke-width="1.1"><path d="M1.6,1.4 H14.6 L8.9,8.6 V13 L6.9,14.2 V8.6 Z" fill="#f1f1f1" stroke="none"/><path d="M1,1 H15.2 M15,1 V2.6 L9.8,8.2 M1.2,1 V2.6 L6.5,8.6 V15.6 L7.6,14.9"/><path d="M9,9 L17,17 M17,9 L9,17" stroke="#c0c0c0"/></svg>
<div style="left:1176px;top:551px;width:352px;height:78.5px;overflow:hidden">
<div class="sb" style="left:8px;top:0px;width:102px;font-size:12.15px">Email</div>
<div class="sb" style="left:113px;top:0px;width:102px;font-size:12.15px">Facebook</div>
<div class="sb" style="left:218px;top:0px;width:103px;font-size:12.15px">Instagram</div>
<div class="sb" style="left:8px;top:28px;width:102px;font-size:12.15px">LinkedIn</div>
<div class="sb" style="left:113px;top:28px;width:102px;font-size:12.15px">Newsletter</div>
<div class="sb" style="left:218px;top:28px;width:103px;font-size:12.15px">Referral</div>
<div class="sb" style="left:8px;top:56px;width:102px;font-size:12.15px">Website</div>
<div class="sb" style="left:113px;top:56px;width:102px;font-size:12.15px">WhatsApp</div>
</div>
<div style="left:1502px;top:551px;width:18px;height:78.5px;background:#f0f0f0"></div>
<div style="left:1502px;top:570px;width:17px;height:27px;background:#cdcdcd"></div>
<svg width="10" height="7" viewBox="0 0 10 7" style="position:absolute;left:1505.9px;top:556.7px" fill="none" stroke="#404040" stroke-width="1.8"><path d="M1.6,5.6 L5,2.2 L8.4,5.6"/></svg>
<svg width="10" height="7" viewBox="0 0 10 7" style="position:absolute;left:1505.9px;top:617.0px" fill="none" stroke="#404040" stroke-width="1.8"><path d="M1.6,1.4 L5,4.8 L8.4,1.4"/></svg>
<div style="left:1174px;top:642px;width:354px;height:120px;background:#fff;border:1px solid #d6d6d6;box-sizing:border-box"></div>
<div class="t" style="left:1183.00px;top:647.00px;width:400px;height:16px;line-height:16px;font-size:11.5px;color:#000;text-align:left;font-weight:700;letter-spacing:-0.24px;">Lead Status</div>
<div style="left:1183px;top:666px;width:336px;height:1px;background:#0cb0a2"></div>
<svg width="18" height="17" viewBox="0 0 18 17" style="position:absolute;left:1467.7px;top:646px" fill="none" stroke="#555" stroke-width="1.05"><path d="M0.5,4 L2.5,5.8 L7.3,0.8 M0.5,9 L2.5,10.8 L7.3,5.8 M0.5,14.2 L2.5,16 L7.3,11"/><path d="M8.2,4.5 H15.5 M8.2,9.5 H15.5 M8.2,14.7 H15.5" stroke-width="1.15"/></svg>
<svg width="19" height="18" viewBox="0 0 19 18" style="position:absolute;left:1499px;top:646.25px" fill="none" stroke="#a9a9a9" stroke-width="1.1"><path d="M1.6,1.4 H14.6 L8.9,8.6 V13 L6.9,14.2 V8.6 Z" fill="#f1f1f1" stroke="none"/><path d="M1,1 H15.2 M15,1 V2.6 L9.8,8.2 M1.2,1 V2.6 L6.5,8.6 V15.6 L7.6,14.9"/><path d="M9,9 L17,17 M17,9 L9,17" stroke="#c0c0c0"/></svg>
<div style="left:1175px;top:671px;width:352px;height:82px;overflow:hidden">
<div class="sb" style="left:8px;top:0px;width:110px;font-size:12.15px">Lost</div>
<div class="sb" style="left:121px;top:0px;width:110px;font-size:12.15px">Negotiation</div>
<div class="sb" style="left:234px;top:0px;width:110px;font-size:12.15px">New</div>
<div class="sb" style="left:8px;top:28px;width:110px;font-size:12.15px">Proposal</div>
<div class="sb" style="left:121px;top:28px;width:110px;font-size:12.15px">Qualified</div>
<div class="sb" style="left:234px;top:28px;width:110px;font-size:12.15px">Status 7</div>
<div class="sb" style="left:8px;top:56px;width:110px;font-size:12.15px">Status 8</div>
<div class="sb" style="left:121px;top:56px;width:110px;font-size:12.15px">Won</div>
</div>
<div style="left:1174px;top:762px;width:354px;height:117px;background:#fff;border:1px solid #d6d6d6;box-sizing:border-box"></div>
<div class="t" style="left:1183.00px;top:767.00px;width:400px;height:16px;line-height:16px;font-size:11.5px;color:#000;text-align:left;font-weight:700;letter-spacing:-0.125px;">Contact Form</div>
<div style="left:1183px;top:786px;width:336px;height:1px;background:#0cb0a2"></div>
<svg width="18" height="17" viewBox="0 0 18 17" style="position:absolute;left:1467.7px;top:766px" fill="none" stroke="#555" stroke-width="1.05"><path d="M0.5,4 L2.5,5.8 L7.3,0.8 M0.5,9 L2.5,10.8 L7.3,5.8 M0.5,14.2 L2.5,16 L7.3,11"/><path d="M8.2,4.5 H15.5 M8.2,9.5 H15.5 M8.2,14.7 H15.5" stroke-width="1.15"/></svg>
<svg width="19" height="18" viewBox="0 0 19 18" style="position:absolute;left:1499px;top:766.25px" fill="none" stroke="#a9a9a9" stroke-width="1.1"><path d="M1.6,1.4 H14.6 L8.9,8.6 V13 L6.9,14.2 V8.6 Z" fill="#f1f1f1" stroke="none"/><path d="M1,1 H15.2 M15,1 V2.6 L9.8,8.2 M1.2,1 V2.6 L6.5,8.6 V15.6 L7.6,14.9"/><path d="M9,9 L17,17 M17,9 L9,17" stroke="#c0c0c0"/></svg>
<div style="left:1175px;top:791px;width:352px;height:79px;overflow:hidden">
<div class="sb" style="left:8px;top:0px;width:102px;font-size:12.15px">Email</div>
<div class="sb" style="left:113px;top:0px;width:102px;font-size:12.15px">Facebook</div>
<div class="sb" style="left:218px;top:0px;width:103px;font-size:12.15px">Instagram</div>
<div class="sb" style="left:8px;top:28px;width:102px;font-size:12.15px">LinkedIn</div>
<div class="sb" style="left:113px;top:28px;width:102px;font-size:12.15px">Newsletter</div>
<div class="sb" style="left:218px;top:28px;width:103px;font-size:12.15px">Phone</div>
<div class="sb" style="left:8px;top:56px;width:102px;font-size:12.15px">Telegram</div>
<div class="sb" style="left:113px;top:56px;width:102px;font-size:12.15px">WhatsApp</div>
</div>
<div style="left:1500.5px;top:791px;width:18.0px;height:79px;background:#f0f0f0"></div>
<div style="left:1500.5px;top:810px;width:17.0px;height:27px;background:#cdcdcd"></div>
<svg width="10" height="7" viewBox="0 0 10 7" style="position:absolute;left:1504.4px;top:796.7px" fill="none" stroke="#404040" stroke-width="1.8"><path d="M1.6,5.6 L5,2.2 L8.4,5.6"/></svg>
<svg width="10" height="7" viewBox="0 0 10 7" style="position:absolute;left:1504.4px;top:857.5px" fill="none" stroke="#404040" stroke-width="1.8"><path d="M1.6,1.4 L5,4.8 L8.4,1.4"/></svg>
</div></body></html>
